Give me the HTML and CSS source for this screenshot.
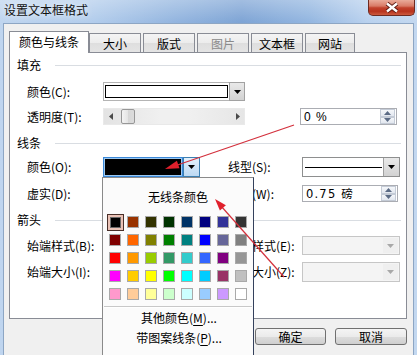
FILE: index.html
```html
<!DOCTYPE html>
<html lang="zh-CN">
<head>
<meta charset="utf-8">
<title>设置文本框格式</title>
<link rel="stylesheet" href="styles.css">
</head>
<body>
<div class="window">
  <div class="titlebar">
    <span class="title">设置文本框格式</span>
    <div class="close">
      <svg width="16" height="11" viewBox="0 0 16 11"><path d="M3 1.5L13 9.5M13 1.5L3 9.5" stroke="#5a1a12" stroke-width="4.2"/><path d="M3 1.5L13 9.5M13 1.5L3 9.5" stroke="#fff" stroke-width="2.4"/></svg>
    </div>
  </div>
  <div class="client">
    <div class="tabs">
      <div class="tab active">颜色与线条</div>
      <div class="tab">大小</div>
      <div class="tab">版式</div>
      <div class="tab disabled">图片</div>
      <div class="tab">文本框</div>
      <div class="tab narrow">网站</div>
    </div>
    <div class="panel">
      <div class="section"><span>填充</span><i class="rule"></i></div>
      <div class="row row-c">
        <span class="lbl">颜色(C):</span>
        <div class="combo fill-combo">
          <div class="field-white"></div>
          <div class="dd"><svg width="7" height="4" viewBox="0 0 7 4"><path d="M0 0h7L3.5 4z" fill="#000"/></svg></div>
        </div>
      </div>
      <div class="row row-t">
        <span class="lbl">透明度(T):</span>
        <div class="scrollbar">
          <svg class="sb-arrow" width="4" height="7" viewBox="0 0 4 7"><path d="M4 0v7L0 3.5z" fill="#4a4a4a"/></svg>
          <div class="thumb"></div>
          <div class="track"></div>
          <svg class="sb-arrow" width="4" height="7" viewBox="0 0 4 7"><path d="M0 0v7L4 3.5z" fill="#4a4a4a"/></svg>
        </div>
        <div class="spin spin-t">
          <span class="val">0 %</span>
          <div class="spinbtns">
            <div class="sbtn"><svg width="7" height="4" viewBox="0 0 7 4"><path d="M0 4h7L3.5 0z" fill="#5b6b85"/></svg></div>
            <div class="sbtn"><svg width="7" height="4" viewBox="0 0 7 4"><path d="M0 0h7L3.5 4z" fill="#5b6b85"/></svg></div>
          </div>
        </div>
      </div>
      <div class="section s-line"><span>线条</span><i class="rule"></i></div>
      <div class="row row-o">
        <span class="lbl">颜色(O):</span>
        <div class="colorbox"><div class="black"></div></div>
        <div class="dd dd-hot"><svg width="7" height="4" viewBox="0 0 7 4"><path d="M0 0h7L3.5 4z" fill="#000"/></svg></div>
        <span class="lbl lbl-r">线型(S):</span>
        <div class="combo line-combo">
          <div class="line-field"><i class="line-sample"></i></div>
          <div class="dd"><svg width="7" height="4" viewBox="0 0 7 4"><path d="M0 0h7L3.5 4z" fill="#000"/></svg></div>
        </div>
      </div>
      <div class="row row-w">
        <span class="lbl">虚实(D):</span>
        <div class="hidden-combo"></div>
        <span class="lbl lbl-r">粗细(W):</span>
        <div class="spin spin-w">
          <span class="val">0.75 磅</span>
          <div class="spinbtns">
            <div class="sbtn"><svg width="7" height="4" viewBox="0 0 7 4"><path d="M0 4h7L3.5 0z" fill="#5b6b85"/></svg></div>
            <div class="sbtn"><svg width="7" height="4" viewBox="0 0 7 4"><path d="M0 0h7L3.5 4z" fill="#5b6b85"/></svg></div>
          </div>
        </div>
      </div>
      <div class="section s-arrow"><span>箭头</span><i class="rule"></i></div>
      <div class="row row-b">
        <span class="lbl">始端样式(B):</span>
        <div class="hidden-combo"></div>
        <span class="lbl lbl-r">末端样式(E):</span>
        <div class="combo disabled-combo">
          <div class="dd-dis"><svg width="7" height="4" viewBox="0 0 7 4"><path d="M0 0h7L3.5 4z" fill="#a8a8a8"/></svg></div>
        </div>
      </div>
      <div class="row row-i">
        <span class="lbl">始端大小(I):</span>
        <div class="hidden-combo"></div>
        <span class="lbl lbl-r">末端大小(Z):</span>
        <div class="combo disabled-combo">
          <div class="dd-dis"><svg width="7" height="4" viewBox="0 0 7 4"><path d="M0 0h7L3.5 4z" fill="#a8a8a8"/></svg></div>
        </div>
      </div>
    </div>
    <div class="buttons">
      <div class="btn">确定</div>
      <div class="btn btn-wide">取消</div>
    </div>
  </div>
</div>

<div class="popup">
  <div class="no-line">无线条颜色</div>
  <div class="palette">
    <div class="cell"><div class="sel"><i class="sw" style="background:#000000"></i></div></div>
    <div class="cell"><i class="sw" style="background:#993300"></i></div>
    <div class="cell"><i class="sw" style="background:#333300"></i></div>
    <div class="cell"><i class="sw" style="background:#003300"></i></div>
    <div class="cell"><i class="sw" style="background:#003366"></i></div>
    <div class="cell"><i class="sw" style="background:#000080"></i></div>
    <div class="cell"><i class="sw" style="background:#333399"></i></div>
    <div class="cell"><i class="sw" style="background:#333333"></i></div>

    <div class="cell"><i class="sw" style="background:#800000"></i></div>
    <div class="cell"><i class="sw" style="background:#ff6600"></i></div>
    <div class="cell"><i class="sw" style="background:#808000"></i></div>
    <div class="cell"><i class="sw" style="background:#008000"></i></div>
    <div class="cell"><i class="sw" style="background:#008080"></i></div>
    <div class="cell"><i class="sw" style="background:#0000ff"></i></div>
    <div class="cell"><i class="sw" style="background:#666699"></i></div>
    <div class="cell"><i class="sw" style="background:#808080"></i></div>

    <div class="cell"><i class="sw" style="background:#ff0000"></i></div>
    <div class="cell"><i class="sw" style="background:#ff9900"></i></div>
    <div class="cell"><i class="sw" style="background:#99cc00"></i></div>
    <div class="cell"><i class="sw" style="background:#339966"></i></div>
    <div class="cell"><i class="sw" style="background:#33cccc"></i></div>
    <div class="cell"><i class="sw" style="background:#3366ff"></i></div>
    <div class="cell"><i class="sw" style="background:#800080"></i></div>
    <div class="cell"><i class="sw" style="background:#969696"></i></div>

    <div class="cell"><i class="sw" style="background:#ff00ff"></i></div>
    <div class="cell"><i class="sw" style="background:#ffcc00"></i></div>
    <div class="cell"><i class="sw" style="background:#ffff00"></i></div>
    <div class="cell"><i class="sw" style="background:#00ff00"></i></div>
    <div class="cell"><i class="sw" style="background:#00ffff"></i></div>
    <div class="cell"><i class="sw" style="background:#00ccff"></i></div>
    <div class="cell"><i class="sw" style="background:#993366"></i></div>
    <div class="cell"><i class="sw" style="background:#c0c0c0"></i></div>

    <div class="cell"><i class="sw" style="background:#ff99cc"></i></div>
    <div class="cell"><i class="sw" style="background:#ffcc99"></i></div>
    <div class="cell"><i class="sw" style="background:#ffff99"></i></div>
    <div class="cell"><i class="sw" style="background:#ccffcc"></i></div>
    <div class="cell"><i class="sw" style="background:#ccffff"></i></div>
    <div class="cell"><i class="sw" style="background:#99ccff"></i></div>
    <div class="cell"><i class="sw" style="background:#cc99ff"></i></div>
    <div class="cell"><i class="sw" style="background:#ffffff"></i></div>
  </div>
  <div class="psep"></div>
  <div class="pitem">其他颜色(<u>M</u>)...</div>
  <div class="pitem">带图案线条(<u>P</u>)...</div>
</div>

<svg class="annot" width="417" height="355" viewBox="0 0 417 355">
  <line x1="294" y1="125" x2="176" y2="165.5" stroke="#d3303c" stroke-width="1.2"/>
  <path d="M165 169L179.5 168.3L176.9 160.7Z" fill="#e0202c"/>
  <line x1="284" y1="277" x2="221" y2="206" stroke="#d3303c" stroke-width="1.2"/>
  <path d="M215 199L225.9 205.3L219.9 210.6Z" fill="#e0202c"/>
</svg>
</body>
</html>
```

FILE: styles.css
```css
html, body {
  margin: 0;
  padding: 0;
}
body {
  width: 417px;
  height: 355px;
  overflow: hidden;
  position: relative;
  font-family: "Noto Sans CJK SC", "Noto Sans", sans-serif;
  font-size: 12px;
  line-height: 16px;
  color: #000;
}
.window {
  height: 355px;
  display: flex;
  flex-direction: column;
  background:
    linear-gradient(to bottom, rgba(255,255,255,0.28), rgba(255,255,255,0) 22px),
    linear-gradient(to right, #bfd5ef 0%, #b3cdec 22%, #93b5df 42%, #7ea4d5 58%, #93b6e0 74%, #b9d1ee 88%, #c3d8f0 100%);
}
.titlebar {
  height: 23px;
  flex: none;
  display: flex;
  align-items: flex-start;
}
.title {
  padding-left: 4px;
  line-height: 20px;
  color: #111;
  text-shadow: 0 0 6px rgba(255,255,255,0.9);
}
.close {
  margin-left: auto;
  margin-right: 2px;
  width: 47px;
  height: 16px;
  box-sizing: border-box;
  border: 1px solid #6e2a20;
  border-top: none;
  border-radius: 0 0 5px 5px;
  background: linear-gradient(to bottom, #e9ab9a 0%, #d97b67 40%, #c2422c 52%, #b8331e 75%, #cc5a3e 100%);
  display: flex;
  align-items: center;
  justify-content: center;
}
.client {
  flex: 1;
  margin: 0 3px;
  border: 1px solid #8da6c4;
  border-bottom: none;
  background: #f0f0f0;
  padding: 7px 6px 0 5px;
}
.tabs {
  display: flex;
  align-items: flex-end;
  height: 21px;
}
.tab {
  width: 52px;
  height: 19px;
  box-sizing: border-box;
  margin-left: 2px;
  border: 1px solid #898c95;
  border-bottom: none;
  background: linear-gradient(to bottom, #f4f4f4 0%, #ececec 50%, #dedede 51%, #e4e4e4 100%);
  display: flex;
  align-items: center;
  justify-content: center;
  padding-top: 1px;
}
.tab.active {
  width: 80px;
  height: 22px;
  margin-left: 0;
  margin-bottom: -1px;
  background: #fff;
  position: relative;
  z-index: 1;
  padding-top: 0;
  padding-bottom: 2px;
}
.tab.active + .tab {
  margin-left: 0;
}
.tab.narrow {
  width: 50px;
}
.tab.disabled {
  color: #8a8a8a;
}
.panel {
  height: 267px;
  box-sizing: border-box;
  border: 1px solid #898c95;
  background: #fff;
  padding-top: 4px;
}
.section {
  height: 16px;
  display: flex;
  align-items: center;
  padding-left: 7px;
  padding-right: 5px;
}
.section .rule {
  flex: 1;
  height: 1px;
  margin-left: 14px;
  background: #d9dde2;
}
.s-line { margin-top: 10px; }
.s-arrow { margin-top: 10px; }
.row {
  display: flex;
  align-items: center;
  padding-left: 17px;
}
.lbl {
  width: 76px;
  flex: none;
  white-space: nowrap;
}
.lbl-r {
  width: 74px;
  margin-left: 28px;
}
.row-c { margin-top: 9px; height: 19px; }
.row-t { margin-top: 7px; height: 17px; }
.row-o { margin-top: 6px; height: 20px; }
.row-w { margin-top: 8px; height: 17px; }
.row-b { margin-top: 8px; height: 19px; }
.row-i { margin-top: 7px; height: 20px; }

.combo {
  display: flex;
  box-sizing: border-box;
  height: 100%;
}
.fill-combo {
  width: 142px;
  border: 1px solid #b4b4b4;
  padding: 1px 0 1px 1px;
  background: #fff;
}
.field-white {
  flex: 1;
  margin: 1px 1px 1px 0;
  border: 1px solid #000;
  background: #fff;
}
.dd {
  width: 16px;
  flex: none;
  box-sizing: border-box;
  border: 1px solid #a2a2a2;
  background: linear-gradient(to bottom, #e9e9e9, #d2d2d2);
  display: flex;
  align-items: center;
  justify-content: center;
}
.fill-combo .dd {
  margin: -2px -1px -2px 0;
}
.scrollbar {
  width: 142px;
  height: 17px;
  box-sizing: border-box;
  display: flex;
  align-items: center;
  background: linear-gradient(to right, #e3e3e3, #f0f0f0 40%, #f0f0f0 60%, #e6e6e6);
  border: 1px solid #e9e9e9;
  padding: 0 4px 0 5px;
}
.sb-arrow { flex: none; }
.thumb {
  width: 14px;
  height: 15px;
  box-sizing: border-box;
  margin-left: 8px;
  border: 1px solid #979797;
  border-radius: 2px;
  background: linear-gradient(to right, #f3f3f3, #e4e4e4 50%, #d7d7d7 51%, #dcdcdc);
}
.track { flex: 1; }
.spin {
  height: 100%;
  box-sizing: border-box;
  border: 1px solid #abadb3;
  background: #fff;
  display: flex;
  align-items: center;
  padding-left: 3px;
}
.spin .val {
  flex: 1;
  letter-spacing: 1px;
  font-family: "Liberation Sans", "Noto Sans CJK SC", sans-serif;
}
.spin-w .val {
  font-family: "DejaVu Sans", "Noto Sans CJK SC", sans-serif;
  font-size: 11.5px;
  letter-spacing: 1.2px;
}
.spin-t {
  width: 97px;
  margin-left: 55px;
}
.spin-w {
  width: 96px;
}
.spinbtns {
  width: 15px;
  height: 100%;
  display: flex;
  flex-direction: column;
  margin-right: 1px;
}
.sbtn {
  flex: 1;
  box-sizing: border-box;
  border: 1px solid #c4cbd6;
  background: linear-gradient(to bottom, #f5f7fa, #e2e7ef);
  display: flex;
  align-items: center;
  justify-content: center;
}
.colorbox {
  width: 80px;
  height: 100%;
  box-sizing: border-box;
  border: 1px solid #3a88d8;
  padding: 1px;
  background: #9cc8f0;
}
.colorbox .black {
  height: 100%;
  background: #000;
}
.dd-hot {
  width: 17px;
  height: 100%;
  border-color: #3c7fb1;
  background: linear-gradient(to bottom, #e3f0fb, #bcd9f3);
}
.line-combo {
  width: 98px;
  border: 1px solid #8e8f8f;
  background: #fff;
}
.line-field {
  flex: 1;
  display: flex;
  align-items: center;
  padding: 0 1px 0 2px;
}
.line-sample {
  flex: 1;
  height: 1px;
  background: #000;
}
.line-combo .dd {
  margin: 0 0 0 0;
  border-top: none;
  border-right: none;
  border-bottom: none;
}
.hidden-combo {
  width: 97px;
  height: 100%;
}
.disabled-combo {
  width: 98px;
  border: 1px solid #c6c6c6;
  background: #f4f4f4;
  justify-content: flex-end;
}
.dd-dis {
  width: 15px;
  display: flex;
  align-items: center;
  justify-content: center;
  margin: 1px;
  background: #efefef;
}
.buttons {
  display: flex;
  justify-content: flex-end;
  gap: 9px;
  margin-top: 9px;
}
.btn {
  width: 71px;
  height: 17px;
  box-sizing: border-box;
  border: 1px solid #707070;
  border-radius: 3px;
  background: linear-gradient(to bottom, #f4f4f4 0%, #ebebeb 50%, #dddddd 51%, #cfcfcf 100%);
  display: flex;
  align-items: center;
  justify-content: center;
  line-height: 15px;
}
.btn-wide { width: 72px; }

/* color popup overlay */
.popup {
  position: absolute;
  left: 102px;
  top: 177px;
  width: 152px;
  height: 190px;
  box-sizing: border-box;
  border: 1px solid #8a8a8a;
  border-right-color: #34415c;
  background: #fbfbfb;
  z-index: 5;
}
.no-line {
  text-align: center;
  padding-top: 10px;
  line-height: 18px;
}
.palette {
  display: grid;
  grid-template-columns: repeat(8, 18px);
  grid-auto-rows: 18px;
  margin-top: 7px;
  padding-left: 3px;
}
.cell {
  display: flex;
  align-items: center;
  justify-content: center;
}
.sw {
  display: block;
  width: 12px;
  height: 12px;
  box-sizing: border-box;
  border: 1px solid #a9a9a9;
}
.sel {
  width: 17px;
  height: 17px;
  box-sizing: border-box;
  border: 1px solid #4a302a;
  background: #eac2b6;
  display: flex;
  align-items: center;
  justify-content: center;
}
.sel .sw {
  width: 11px;
  height: 11px;
  border-color: #6a6a6a;
}
.psep {
  height: 1px;
  margin: 3px 1px 0 1px;
  background: #c8c8c8;
  border-bottom: 1px solid #fff;
}
.pitem {
  text-align: center;
  line-height: 20px;
  padding-left: 2px;
}
.pitem:first-of-type {
  margin-top: 5px;
}
.pitem u {
  text-underline-offset: 2px;
}
.annot {
  position: absolute;
  left: 0;
  top: 0;
  z-index: 10;
  pointer-events: none;
}
```
